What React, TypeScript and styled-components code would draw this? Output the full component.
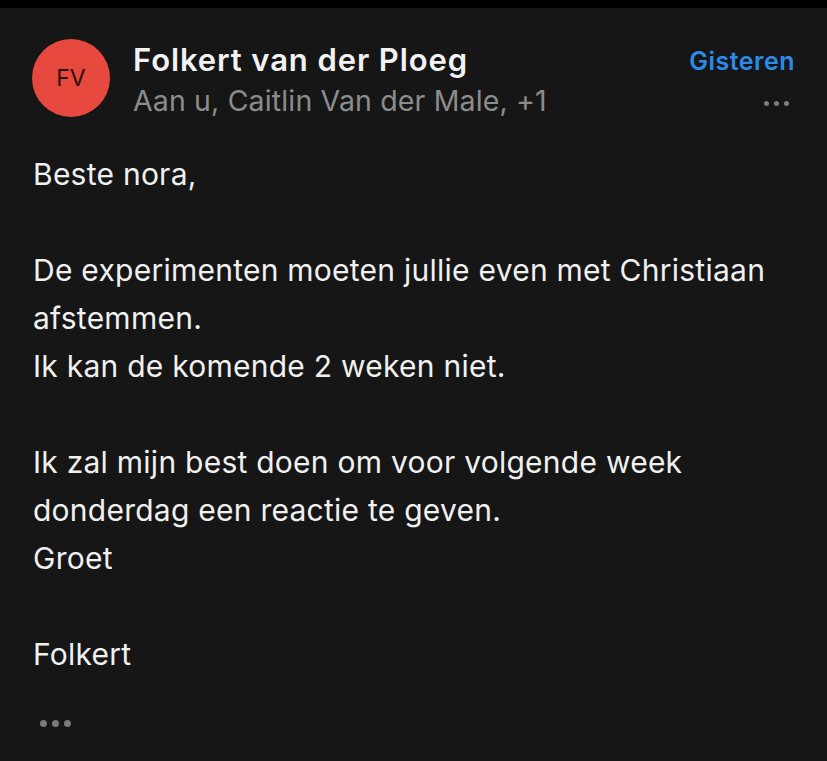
import React from "react";
import styled, { createGlobalStyle } from "styled-components";

const Global = createGlobalStyle`
  html, body { margin: 0; padding: 0; background: #161616; }
  body { font-family: Inter, "Noto Sans", sans-serif; }
`;

const Page = styled.div`
  width: 827px;
  height: 761px;
  background: #161616;
  border-top: 8px solid #000;
  box-sizing: border-box;
  overflow: hidden;
`;

const Header = styled.div`
  display: flex;
  align-items: flex-start;
  padding: 31px 32px 0 32px;
`;

const Avatar = styled.div`
  width: 78px;
  height: 78px;
  border-radius: 50%;
  background: #e8493f;
  color: #2a0f0c;
  display: flex;
  align-items: center;
  justify-content: center;
  font-size: 23px;
  font-weight: 400;
  flex-shrink: 0;
`;

const Meta = styled.div`
  flex: 1;
  display: flex;
  flex-direction: column;
  margin-left: 23px;
`;

const Name = styled.div`
  color: #f2f2f2;
  font-size: 31px;
  font-weight: 600;
  line-height: 42px;
  letter-spacing: 0.9px;
`;

const Recipients = styled.div`
  color: #8c8c8c;
  font-size: 28.5px;
  line-height: 40px;
  letter-spacing: 0.15px;
`;

const Side = styled.div`
  display: flex;
  flex-direction: column;
  align-items: flex-end;
`;

const Date = styled.div`
  color: #2b8be6;
  font-size: 25px;
  font-weight: 600;
  line-height: 44px;
  letter-spacing: 0.5px;
`;

const Dots = styled.div<{ $size: number; $gap: number; $color: string }>`
  display: flex;
  gap: ${(p) => p.$gap}px;
  & > span {
    width: ${(p) => p.$size}px;
    height: ${(p) => p.$size}px;
    border-radius: 50%;
    background: ${(p) => p.$color};
  }
`;

const SideDots = styled(Dots)`
  margin-top: 18px;
  margin-right: 6px;
`;

const Body = styled.div`
  padding: 0 33px;
  margin-top: 29px;
  color: #f0f0f0;
  font-size: 30px;
  line-height: 48px;
  letter-spacing: 0.25px;
`;

const Line = styled.div`
  min-height: 48px;
`;

const FooterDots = styled(Dots)`
  margin: 42px 0 0 40px;
`;

const lines = [
  "Beste nora,",
  "",
  "De experimenten moeten jullie even met Christiaan",
  "afstemmen.",
  "Ik kan de komende 2 weken niet.",
  "",
  "Ik zal mijn best doen om voor volgende week",
  "donderdag een reactie te geven.",
  "Groet",
  "",
  "Folkert",
];

export default function App() {
  return (
    <Page>
      <Global />
      <Header>
        <Avatar>FV</Avatar>
        <Meta>
          <Name>Folkert van der Ploeg</Name>
          <Recipients>Aan u, Caitlin Van der Male, +1</Recipients>
        </Meta>
        <Side>
          <Date>Gisteren</Date>
          <SideDots $size={5} $gap={5} $color="#7d7d7d">
            <span />
            <span />
            <span />
          </SideDots>
        </Side>
      </Header>
      <Body>
        {lines.map((l, i) => (
          <Line key={i}>{l}</Line>
        ))}
      </Body>
      <FooterDots $size={7} $gap={5} $color="#7a7a7a">
        <span />
        <span />
        <span />
      </FooterDots>
    </Page>
  );
}
